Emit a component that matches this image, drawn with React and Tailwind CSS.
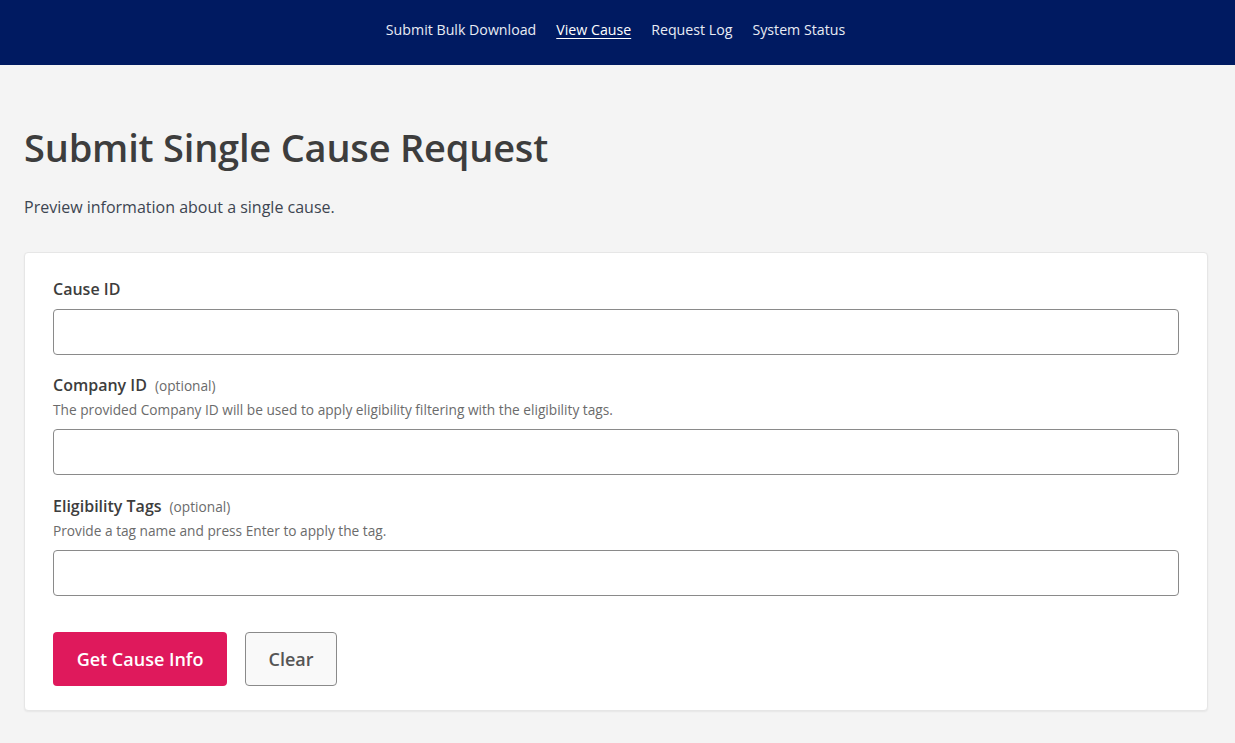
export default function App() {
  const nav = ['Submit Bulk Download', 'View Cause', 'Request Log', 'System Status'];
  return (
    <div className="min-h-screen bg-[#f4f4f4] font-['Open_Sans',sans-serif] text-[#3d3d3d]">
      <header className="h-[65px] bg-[#001a61] flex items-center justify-center">
        <nav className="flex gap-5 text-[14.2px] text-[#e8ecf4] pb-[6px] pr-[4px]">
          {nav.map((n) => (
            <a key={n} href="#" className={n === 'View Cause' ? 'underline underline-offset-[3px] text-white' : ''}>
              {n}
            </a>
          ))}
        </nav>
      </header>

      <main className="pl-6 pr-[27px] pb-8">
        <h1 className="mt-[59px] text-[38px] leading-[46px] font-semibold text-[#3d3d3d] tracking-[-0.2px]">
          Submit Single Cause Request
        </h1>
        <p className="mt-[25px] text-[16px] leading-6 text-[#3d4551]">Preview information about a single cause.</p>

        <div className="mt-[33px] bg-white rounded border border-[#e6e6e6] shadow-[0_1px_2px_rgba(0,0,0,0.06)] px-[28px] pt-[24px] pb-[24px]">
          <label className="block text-[16px] leading-6 font-semibold">Cause ID</label>
          <input className="mt-[8px] block w-full h-[46px] rounded border border-[#8a8a8a] bg-white" />

          <div className="mt-[18px] flex items-baseline gap-2">
            <label className="text-[16px] leading-6 font-semibold">Company ID</label>
            <span className="text-[13.7px] text-[#6b6b6b]">(optional)</span>
          </div>
          <p className="mt-[3px] text-[13.7px] leading-5 text-[#6b6b6b]">
            The provided Company ID will be used to apply eligibility filtering with the eligibility tags.
          </p>
          <input className="mt-[9px] block w-full h-[46px] rounded border border-[#8a8a8a] bg-white" />

          <div className="mt-[19px] flex items-baseline gap-2">
            <label className="text-[16px] leading-6 font-semibold">Eligibility Tags</label>
            <span className="text-[13.7px] text-[#6b6b6b]">(optional)</span>
          </div>
          <p className="mt-[3px] text-[13.7px] leading-5 text-[#6b6b6b]">Provide a tag name and press Enter to apply the tag.</p>
          <input className="mt-[9px] block w-full h-[46px] rounded border border-[#8a8a8a] bg-white" />

          <div className="mt-[36px] flex gap-[18px]">
            <button className="h-[54px] w-[174px] rounded bg-[#df195c] text-white text-[18px] font-semibold">
              Get Cause Info
            </button>
            <button className="h-[54px] w-[92px] rounded border border-[#8a8a8a] bg-[#f9f9f9] text-[#555] text-[18px] font-semibold">
              Clear
            </button>
          </div>
        </div>
      </main>
    </div>
  );
}
